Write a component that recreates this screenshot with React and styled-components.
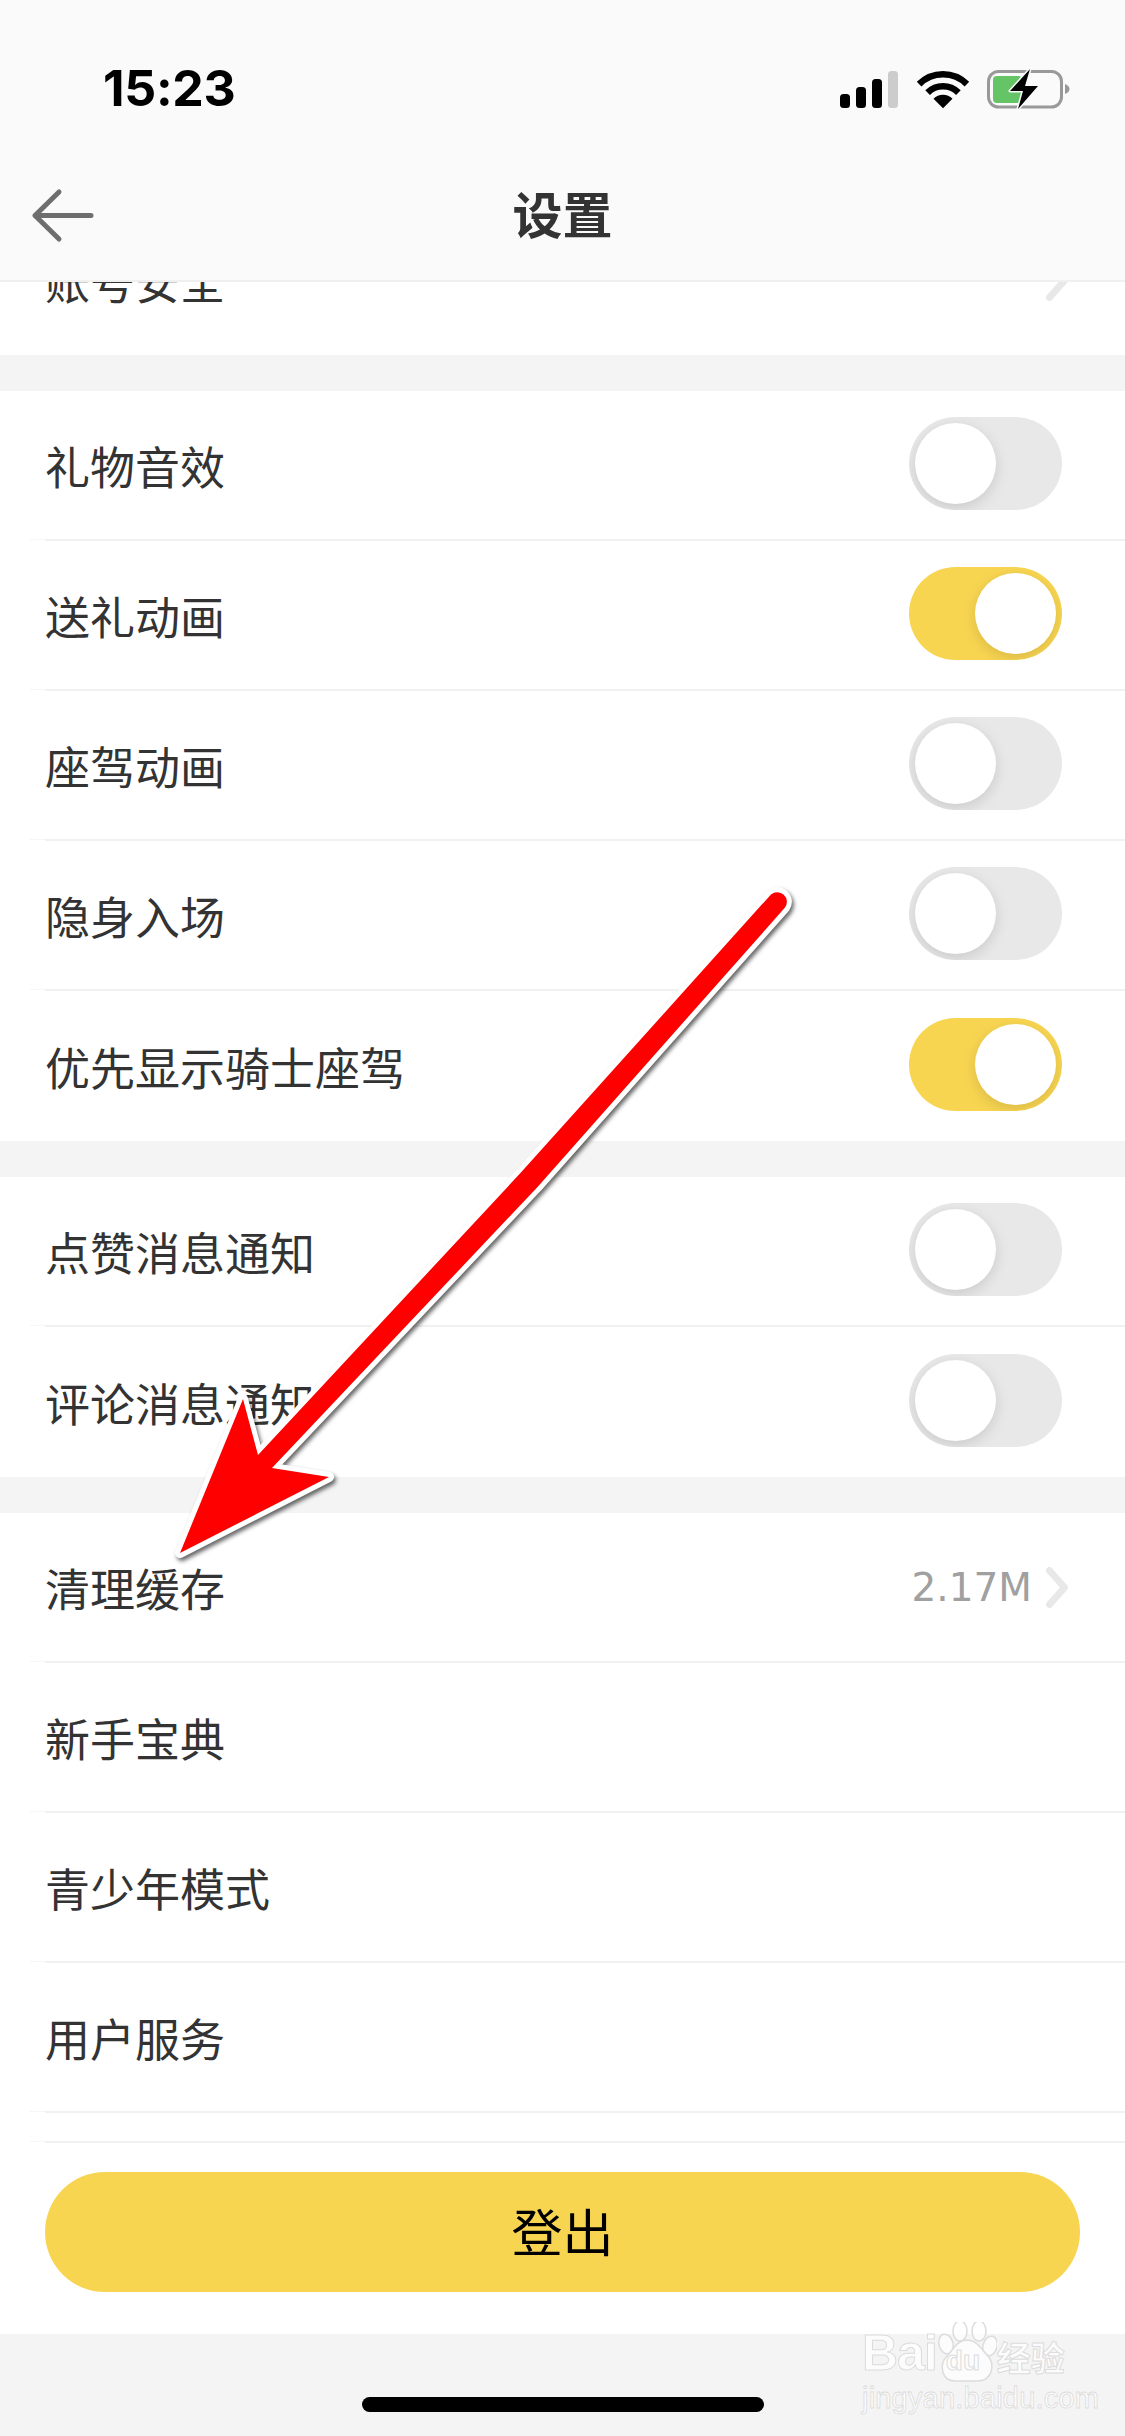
import React from "react";
import styled, { createGlobalStyle } from "styled-components";

const GlobalStyle = createGlobalStyle`
  html, body {
    margin: 0;
    padding: 0;
    background: #f4f4f4;
  }
  * {
    box-sizing: border-box;
  }
`;

const Page = styled.div`
  position: relative;
  width: 1125px;
  height: 2436px;
  display: flex;
  flex-direction: column;
  overflow: hidden;
  background: #f4f4f4;
  font-family: "Noto Sans CJK SC", sans-serif;
  color: #333;
`;

const Header = styled.header`
  flex: none;
  height: 282px;
  background: #fafafa;
  border-bottom: 2px solid #f0f0f0;
`;

const StatusBar = styled.div`
  height: 178px;
  display: flex;
  align-items: center;
  justify-content: space-between;
  padding: 0 55px 0 103px;
`;

const Time = styled.span`
  font-family: Inter, sans-serif;
  font-weight: 700;
  font-size: 50px;
  letter-spacing: -0.3px;
  margin-top: -2px;
  color: #000;
`;

const Nav = styled.div`
  position: relative;
  height: 74px;
  display: flex;
  align-items: center;
  justify-content: center;
`;

const BackIcon = styled.svg`
  position: absolute;
  left: 30px;
  top: 10px;
`;

const Title = styled.h1`
  margin: -6px 0 0;
  font-size: 50px;
  font-weight: 700;
  line-height: 74px;
  color: #333;
`;

const Scroll = styled.main`
  flex: 1;
  min-height: 0;
  overflow: hidden;
  display: flex;
  flex-direction: column;
  gap: 36px;
`;

const Group = styled.section`
  background: #fff;
  padding-left: 45px;
  margin-top: ${(p) => p.$offset || 0}px;
`;

const Row = styled.div`
  position: relative;
  height: ${(p) => p.$height || 150}px;
  flex: none;
  display: flex;
  align-items: center;
  justify-content: space-between;
  padding: 0 63px 3px 0;
  border-bottom: ${(p) => (p.$last ? "none" : "2px solid #f1f1f1")};

  /* the faint hairline that runs on a little past the inset separator */
  &::after {
    content: ${(p) => (p.$last ? "none" : '""')};
    position: absolute;
    left: -15px;
    bottom: -1px;
    width: 15px;
    height: 1px;
    background: #f6f6f6;
  }
`;

const Label = styled.span`
  font-size: 45px;
  font-weight: 400;
  line-height: 60px;
  margin-top: 4px;
  color: #333;
`;

const Track = styled.div`
  position: relative;
  width: 153px;
  height: 93px;
  border-radius: 47px;
  overflow: hidden;
  background: ${(p) => (p.$on ? "#f8d551" : "#e8e8e8")};
`;

const Knob = styled.div`
  position: absolute;
  top: 6px;
  left: ${(p) => (p.$on ? 66 : 6)}px;
  width: 81px;
  height: 81px;
  border-radius: 50%;
  background: #fff;
  box-shadow: 0 4px 14px rgba(0, 0, 0, 0.13);
`;

const Trailing = styled.div`
  display: flex;
  align-items: center;
  gap: 14px;
  margin: 4px -6px 0 0;
`;

const Value = styled.span`
  font-family: "DejaVu Sans", sans-serif;
  font-size: 39px;
  color: #a0a0a0;
`;

const Footer = styled.div`
  flex: none;
  background: #fff;
  padding: 29px 45px 42px;
`;

const LogoutButton = styled.button`
  display: block;
  width: 100%;
  height: 120px;
  border: none;
  border-radius: 60px;
  background: #f8d551;
  font-family: inherit;
  font-size: 51px;
  color: #000;
  padding: 0 0 4px;
`;

const HomeArea = styled.div`
  flex: none;
  height: 102px;
  padding-top: 63px;
  display: flex;
  justify-content: center;
  background: #f4f4f4;
`;

const HomeBar = styled.div`
  width: 402px;
  height: 15px;
  border-radius: 8px;
  background: #000;
`;

const ArrowOverlay = styled.svg`
  position: absolute;
  left: 160px;
  top: 880px;
  filter: drop-shadow(2px 3px 2px rgba(0, 0, 0, 0.6));
`;

const Watermark = styled.div`
  position: absolute;
  left: 862px;
  top: 2322px;
  width: 204px;
  color: rgba(255, 255, 255, 0.75);
  -webkit-text-stroke: 1px #dcdcdc;
`;

const MarkLine = styled.div`
  display: flex;
  align-items: flex-end;
  height: 60px;
`;

const MarkBai = styled.span`
  font-family: "Liberation Sans", sans-serif;
  font-weight: 700;
  font-size: 50px;
  line-height: 58px;
  letter-spacing: -1px;
`;

const Paw = styled.div`
  position: relative;
  flex: none;
  width: 60px;
  height: 60px;
`;

const PawText = styled.span`
  position: absolute;
  left: 9px;
  bottom: 6px;
  font-family: "Liberation Sans", sans-serif;
  font-weight: 700;
  font-size: 28px;
  line-height: 30px;
  color: transparent;
`;

const MarkCn = styled.span`
  font-size: 34px;
  font-weight: 700;
  line-height: 50px;
  white-space: nowrap;
`;

const MarkUrl = styled.div`
  font-family: "Liberation Sans", sans-serif;
  font-size: 29px;
  line-height: 32px;
  letter-spacing: 0.2px;
  white-space: nowrap;
  -webkit-text-stroke: 0.8px #dcdcdc;
`;

const StatusIcons = () => (
  <svg width="230" height="41" viewBox="840 68 230 41">
    <rect x="840" y="93" width="10" height="14" rx="3.5" fill="#000" />
    <rect x="856" y="86" width="10" height="21" rx="3.5" fill="#000" />
    <rect x="872" y="78" width="10" height="29" rx="3.5" fill="#000" />
    <rect x="888" y="70" width="10" height="37" rx="3.5" fill="#ccc" />
    <path d="M919.1 83.1A33.8 33.8 0 0 1 966.9 83.1" fill="none" stroke="#000" strokeWidth="6.5" />
    <path d="M927.6 91.6A21.8 21.8 0 0 1 958.4 91.6" fill="none" stroke="#000" strokeWidth="6.5" />
    <path d="M943 107.3L933.5 97.7A13.5 13.5 0 0 1 952.5 97.7Z" fill="#000" />
    <rect x="988.5" y="70.5" width="73" height="35.5" rx="10" fill="none" stroke="#999" strokeWidth="3" />
    <rect x="993" y="75" width="29" height="27" rx="4" fill="#65c466" />
    <path d="M1065 83C1068 84 1069.5 86 1069.5 88S1068 92 1065 93Z" fill="#999" />
    <path
      d="M1030 68L1010 90L1023 90L1018 108L1038 85L1025 85Z"
      fill="#000"
      stroke="#fafafa"
      strokeWidth="3"
      strokeLinejoin="round"
      paintOrder="stroke"
    />
  </svg>
);

const BackArrow = () => (
  <BackIcon width="64" height="56" viewBox="30 188 64 56">
    <path
      d="M91 215.500H35M59 192L35 215.500L59 239"
      fill="none"
      stroke="#6e6e6e"
      strokeWidth="5"
      strokeLinecap="round"
      strokeLinejoin="round"
    />
  </BackIcon>
);

const Chevron = () => (
  <svg width="22" height="41" viewBox="0 0 22 41">
    <path
      d="M3.5 3.5L18.5 20.5L3.5 37.5"
      fill="none"
      stroke="#e8e8e8"
      strokeWidth="7"
      strokeLinecap="round"
      strokeLinejoin="round"
    />
  </svg>
);

const Switch = ({ on }) => (
  <Track $on={on}>
    <Knob $on={on} />
  </Track>
);

const RedArrow = () => (
  <ArrowOverlay width="650" height="700" viewBox="160 880 650 700">
    <path
      d="M180 1553L243 1399L258 1455L520.900 1172.600L771 894.400A9.700 9.700 0 0 1 785 907.600L537.100 1187.400L272 1468L329 1477Z"
      fill="#fe0000"
      stroke="#fff"
      strokeWidth="10"
      strokeLinejoin="round"
      paintOrder="stroke"
    />
  </ArrowOverlay>
);

const BaiduMark = () => (
  <Watermark>
    <MarkLine>
      <MarkBai>Bai</MarkBai>
      <Paw>
        <svg width="60" height="60" viewBox="930 2318 60 60">
          <g fill="rgba(255,255,255,0.75)" stroke="#dcdcdc" strokeWidth="1.5">
            <ellipse cx="939" cy="2340" rx="7" ry="10" transform="rotate(-15 939 2340)" />
            <ellipse cx="953" cy="2327" rx="7" ry="10" />
            <ellipse cx="972" cy="2327" rx="7" ry="10" />
            <ellipse cx="983" cy="2342" rx="7" ry="10" transform="rotate(15 983 2342)" />
            <path d="M960 2336C970 2336 975 2346 981 2352C988 2360 986 2377 970 2377H948C934 2377 932 2360 940 2352C946 2346 950 2336 960 2336Z" />
          </g>
        </svg>
        <PawText>du</PawText>
      </Paw>
      <MarkCn>经验</MarkCn>
    </MarkLine>
    <MarkUrl>jingyan.baidu.com</MarkUrl>
  </Watermark>
);

const toggles = [
  { label: "礼物音效", on: false },
  { label: "送礼动画", on: true },
  { label: "座驾动画", on: false },
  { label: "隐身入场", on: false },
  { label: "优先显示骑士座驾", on: true },
];

const notices = [
  { label: "点赞消息通知", on: false },
  { label: "评论消息通知", on: false },
];

const links = ["新手宝典", "青少年模式", "用户服务"];

const App = () => (
  <Page>
    <GlobalStyle />
    <Header>
      <StatusBar>
        <Time>15:23</Time>
        <StatusIcons />
      </StatusBar>
      <Nav>
        <BackArrow />
        <Title>设置</Title>
      </Nav>
    </Header>
    <Scroll>
      <Group $offset={-77}>
        <Row $last>
          <Label>账号安全</Label>
          <Trailing>
            <Chevron />
          </Trailing>
        </Row>
      </Group>
      <Group>
        {toggles.map((t, i) => (
          <Row key={t.label} $last={i === toggles.length - 1}>
            <Label>{t.label}</Label>
            <Switch on={t.on} />
          </Row>
        ))}
      </Group>
      <Group>
        {notices.map((t, i) => (
          <Row key={t.label} $last={i === notices.length - 1}>
            <Label>{t.label}</Label>
            <Switch on={t.on} />
          </Row>
        ))}
      </Group>
      <Group>
        <Row>
          <Label>清理缓存</Label>
          <Trailing>
            <Value>2.17M</Value>
            <Chevron />
          </Trailing>
        </Row>
        {links.map((label) => (
          <Row key={label}>
            <Label>{label}</Label>
          </Row>
        ))}
        <Row $height={30} />
      </Group>
    </Scroll>
    <Footer>
      <LogoutButton>登出</LogoutButton>
    </Footer>
    <HomeArea>
      <HomeBar />
    </HomeArea>
    <RedArrow />
    <BaiduMark />
  </Page>
);

export default App;
